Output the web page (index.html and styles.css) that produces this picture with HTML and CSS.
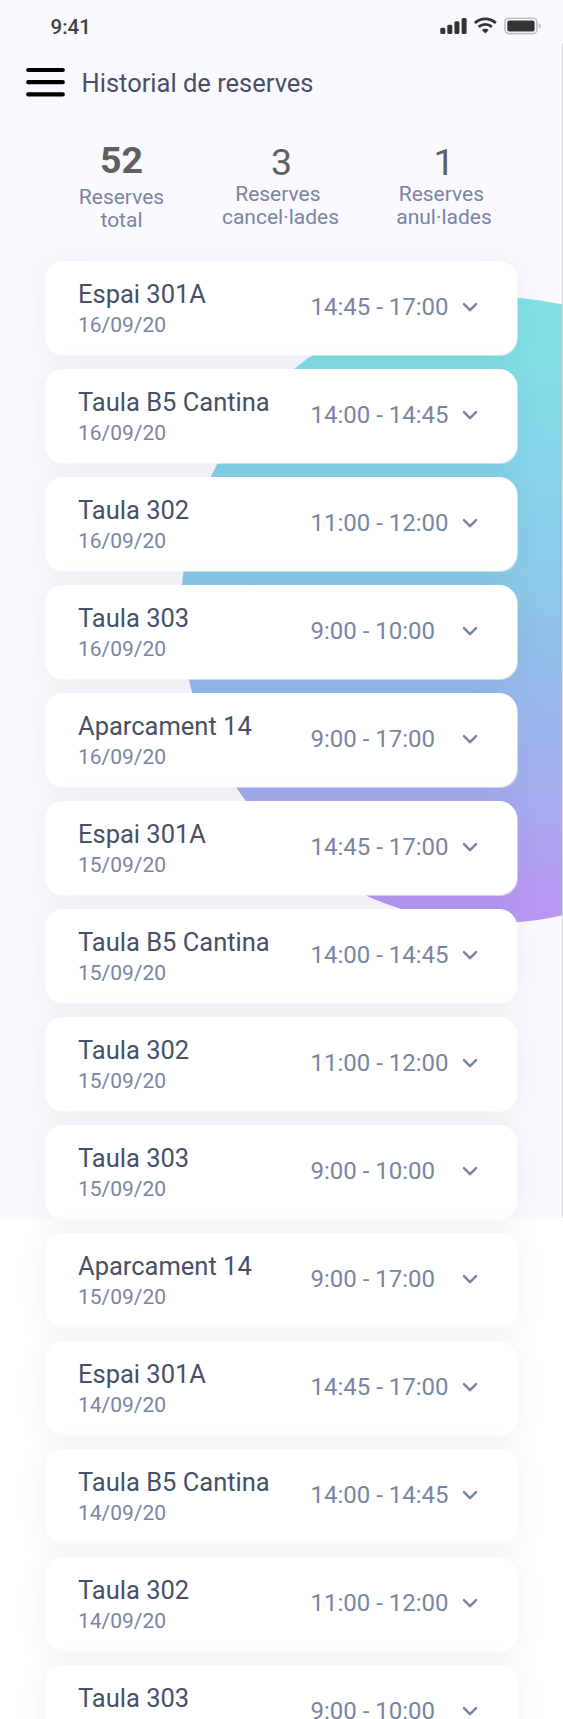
FILE: index.html
```
<!DOCTYPE html>
<html lang="ca">
<head>
<meta charset="utf-8">
<title>Historial de reserves</title>
<link rel="stylesheet" href="styles.css">
</head>
<body>
<svg class="defs" width="0" height="0"><symbol id="chevron" viewBox="0 0 16 11"><path d="M2 2.2 8 8.2 14 2.2" fill="none" stroke="currentColor" stroke-width="2.6" stroke-linecap="round" stroke-linejoin="round"/></symbol></svg>
<div class="page">
  <div class="backdrop"><div class="orb"></div></div>
  <header class="status">
    <span class="clock">9:41</span>
    <svg class="signals" width="104" height="20" viewBox="0 0 104 20">
      <g fill="#343434">
        <rect x="2.300" y="11.700" width="5" height="6.200" rx="1.500"/>
        <rect x="9.300" y="8.700" width="5" height="9.200" rx="1.500"/>
        <rect x="16.400" y="5.300" width="5" height="12.600" rx="1.500"/>
        <rect x="23.600" y="2" width="5" height="15.900" rx="1.500"/>
        <path d="M47.300 12.800c1.500 0 2.600.5 3.400 1.300l-3.400 3.400-3.400-3.400c.8-.8 1.900-1.300 3.400-1.300z"/>
      </g>
      <g fill="none" stroke="#343434" stroke-width="2.800">
        <path d="M36.800 7c5.800-5.600 15.200-5.600 21 0"/>
        <path d="M40.700 10.900c3.700-3.300 9.500-3.300 13.200 0"/>
      </g>
      <rect x="66.900" y="2.200" width="32" height="15.400" rx="4" fill="none" stroke="#c0bfc4" stroke-width="1.600"/>
      <rect x="69.300" y="4.400" width="27.300" height="11" rx="2" fill="#343434"/>
      <path d="M100.800 7.200c1.300.5 2 1.500 2 2.700s-.7 2.200-2 2.700z" fill="#c0bfc4"/>
    </svg>
  </header>
  <nav class="bar">
    <svg class="menu" width="39" height="30" viewBox="0 0 39 30"><path d="M2.200 3h34.600M2.200 15.200h34.600M2.200 27.400h34.600" stroke="#000" stroke-width="4.200" stroke-linecap="round"/></svg>
    <h1 class="heading">Historial de reserves</h1>
  </nav>
  <section class="stats">
    <div class="stat stat-main"><div class="num">52</div><div class="label">Reserves<br>total</div></div>
    <div class="stat stat-mid"><div class="num">3</div><div class="label">Reserves&nbsp;<br>cancel·lades</div></div>
    <div class="stat stat-end"><div class="num">1</div><div class="label">Reserves&nbsp;<br>anul·lades</div></div>
  </section>
  <main class="list">
    <article class="card"><div class="info"><div class="place">Espai 301A</div><div class="date">16/09/20</div></div><div class="time">14:45 - 17:00</div><svg class="chev"><use href="#chevron"/></svg></article>
    <article class="card"><div class="info"><div class="place">Taula B5 Cantina</div><div class="date">16/09/20</div></div><div class="time">14:00 - 14:45</div><svg class="chev"><use href="#chevron"/></svg></article>
    <article class="card"><div class="info"><div class="place">Taula 302</div><div class="date">16/09/20</div></div><div class="time">11:00 - 12:00</div><svg class="chev"><use href="#chevron"/></svg></article>
    <article class="card"><div class="info"><div class="place">Taula 303</div><div class="date">16/09/20</div></div><div class="time">9:00 - 10:00</div><svg class="chev"><use href="#chevron"/></svg></article>
    <article class="card"><div class="info"><div class="place">Aparcament 14</div><div class="date">16/09/20</div></div><div class="time">9:00 - 17:00</div><svg class="chev"><use href="#chevron"/></svg></article>
    <article class="card"><div class="info"><div class="place">Espai 301A</div><div class="date">15/09/20</div></div><div class="time">14:45 - 17:00</div><svg class="chev"><use href="#chevron"/></svg></article>
    <article class="card"><div class="info"><div class="place">Taula B5 Cantina</div><div class="date">15/09/20</div></div><div class="time">14:00 - 14:45</div><svg class="chev"><use href="#chevron"/></svg></article>
    <article class="card"><div class="info"><div class="place">Taula 302</div><div class="date">15/09/20</div></div><div class="time">11:00 - 12:00</div><svg class="chev"><use href="#chevron"/></svg></article>
    <article class="card"><div class="info"><div class="place">Taula 303</div><div class="date">15/09/20</div></div><div class="time">9:00 - 10:00</div><svg class="chev"><use href="#chevron"/></svg></article>
    <article class="card"><div class="info"><div class="place">Aparcament 14</div><div class="date">15/09/20</div></div><div class="time">9:00 - 17:00</div><svg class="chev"><use href="#chevron"/></svg></article>
    <article class="card"><div class="info"><div class="place">Espai 301A</div><div class="date">14/09/20</div></div><div class="time">14:45 - 17:00</div><svg class="chev"><use href="#chevron"/></svg></article>
    <article class="card"><div class="info"><div class="place">Taula B5 Cantina</div><div class="date">14/09/20</div></div><div class="time">14:00 - 14:45</div><svg class="chev"><use href="#chevron"/></svg></article>
    <article class="card"><div class="info"><div class="place">Taula 302</div><div class="date">14/09/20</div></div><div class="time">11:00 - 12:00</div><svg class="chev"><use href="#chevron"/></svg></article>
    <article class="card"><div class="info"><div class="place">Taula 303</div></div><div class="time">9:00 - 10:00</div><svg class="chev"><use href="#chevron"/></svg></article>
  </main>
</div>
</body>
</html>
```
FILE: styles.css
```
* { box-sizing: border-box; }
body { margin: 0; background: #fff; font-family: Roboto, sans-serif; }
.defs { position: absolute; }
.page { position: relative; width: 563px; height: 1719px; overflow: hidden; isolation: isolate; }
.backdrop { position: absolute; z-index: -1; top: 0; left: 0; width: 563px; height: 1219px; background: #faf9ff; overflow: hidden; }
.backdrop::after { content: ""; position: absolute; right: 0; top: 43px; bottom: 1px; width: 1px; background: #dcdce0; }
.orb { position: absolute; left: 181px; top: 297px; width: 626px; height: 626px; border-radius: 50%; background: linear-gradient(#80e1e4 0%, #81dfe6 8%, #86d4e9 26%, #8ccae9 45%, #96bbec 62%, #a5adef 79%, #b898f3 96%); }
.status { height: 51px; padding: 16px 21px 0 50.500px; display: flex; justify-content: space-between; align-items: flex-start; }
.clock { font-size: 20.500px; line-height: 22px; font-weight: 500; color: #414141; }
.bar { height: 63px; padding-left: 26px; display: flex; align-items: center; gap: 16.500px; }
.menu { margin-bottom: 2px; }
.heading { margin: 0; font-size: 25.500px; line-height: 30px; font-weight: 400; color: #475067; }
.stats { height: 147px; padding-top: 27px; display: flex; text-align: center; }
.stat { padding-top: 2px; }
.stat-main { width: 163px; margin-left: 40px; padding-top: 0; }
.stat-mid { width: 155px; }
.stat-end { width: 172px; }
.num { font-size: 37.500px; line-height: 38px; margin-bottom: 2px; color: #606060; }
.stat-mid .num { padding-left: 2px; }
.stat-main .num { font-weight: 700; margin-bottom: 7px; }
.label { font-size: 21px; line-height: 23px; color: #7886a3; }
.list { display: grid; grid-auto-rows: 94px; row-gap: 14px; margin-left: 45px; width: 472px; }
.card { display: grid; grid-template-columns: 232.500px 151.500px 16px; align-items: center; padding-left: 33px; background: #fff; border-radius: 18px; box-shadow: 1px 1px 0 rgba(255, 255, 255, .5), 0 3px 30px rgba(40, 65, 80, .07); }
.info { height: 61px; }
.place { font-size: 25.500px; line-height: 32px; color: #475067; white-space: nowrap; }
.date { font-size: 21px; line-height: 28px; padding-top: 1px; color: #7886a3; }
.time { font-size: 24px; line-height: 28px; padding-bottom: 2px; color: #7886a3; white-space: nowrap; }
.chev { width: 16px; height: 11px; margin-bottom: 1px; color: #7886a3; }
```
